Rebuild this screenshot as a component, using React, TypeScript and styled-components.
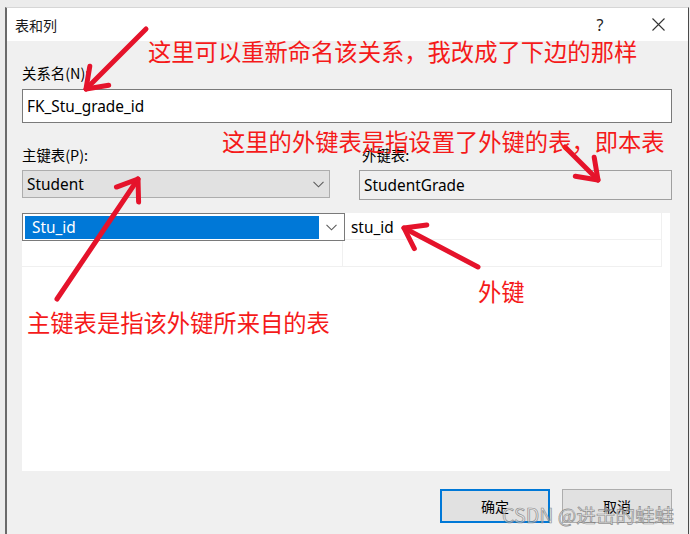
import styled, { createGlobalStyle } from "styled-components";

const GlobalStyle = createGlobalStyle`
  html, body {
    margin: 0;
    padding: 0;
    background: #e8e8e8;
  }
  body {
    font-family: "Noto Sans", "Noto Sans CJK SC", sans-serif;
    color: #000;
  }
`;

type Pt = { x: number; y: number };

const ARROWS: { tail: Pt; tip: Pt }[] = [
  { tail: { x: 146, y: 29 }, tip: { x: 86, y: 89 } },
  { tail: { x: 57, y: 299 }, tip: { x: 138, y: 179 } },
  { tail: { x: 565, y: 147 }, tip: { x: 598, y: 180 } },
  { tail: { x: 478, y: 267 }, tip: { x: 404, y: 228 } },
];

const NOTES = [
  { x: 148, y: 38, text: "这里可以重新命名该关系，我改成了下边的那样" },
  { x: 222, y: 128, text: "这里的外键表是指设置了外键的表，即本表" },
  { x: 27, y: 309, text: "主键表是指该外键所来自的表" },
  { x: 478, y: 278, text: "外键" },
];

function Arrow({ tail, tip }: { tail: Pt; tip: Pt }) {
  const ang = Math.atan2(tail.y - tip.y, tail.x - tip.x);
  const len = 23;
  const spread = 0.62;
  const b1 = { x: tip.x + len * Math.cos(ang + spread), y: tip.y + len * Math.sin(ang + spread) };
  const b2 = { x: tip.x + len * Math.cos(ang - spread), y: tip.y + len * Math.sin(ang - spread) };
  return (
    <g stroke="#e5132b" strokeWidth={5} strokeLinecap="round" strokeLinejoin="round" fill="none">
      <line x1={tail.x} y1={tail.y} x2={tip.x} y2={tip.y} />
      <polyline points={`${b1.x},${b1.y} ${tip.x},${tip.y} ${b2.x},${b2.y}`} />
    </g>
  );
}

function Chevron() {
  return (
    <svg width="11" height="7" viewBox="0 0 11 7">
      <path d="M0.5 0.8 L5.5 5.8 L10.5 0.8" stroke="#5c5c5c" strokeWidth="1.1" fill="none" />
    </svg>
  );
}

export default function App() {
  return (
    <Page>
      <GlobalStyle />
      <Dialog>
        <TitleBar>
          <Title>表和列</Title>
          <HelpButton>?</HelpButton>
          <CloseButton>
            <svg width="13" height="13" viewBox="0 0 13 13">
              <path d="M0.5 0.5 L12.5 12.5 M12.5 0.5 L0.5 12.5" stroke="#333" strokeWidth="1.1" />
            </svg>
          </CloseButton>
        </TitleBar>
        <Body>
          <Label>关系名(N):</Label>
          <TextInput>FK_Stu_grade_id</TextInput>
          <TwoCols>
            <Field>
              <Label>主键表(P):</Label>
              <Combo>
                <span>Student</span>
                <Chevron />
              </Combo>
            </Field>
            <Field>
              <Label $indent={3}>外键表:</Label>
              <ReadOnlyBox>StudentGrade</ReadOnlyBox>
            </Field>
          </TwoCols>
          <GridPanel>
            <GridTable>
              <GridRow>
                <KeyCell>
                  <CellCombo>
                    <Selected>Stu_id</Selected>
                    <ChevronSlot>
                      <Chevron />
                    </ChevronSlot>
                  </CellCombo>
                </KeyCell>
                <Cell>stu_id</Cell>
              </GridRow>
              <GridRow>
                <Cell />
                <Cell />
              </GridRow>
            </GridTable>
          </GridPanel>
          <Footer>
            <Button $primary>确定</Button>
            <Button>取消</Button>
          </Footer>
        </Body>
      </Dialog>

      <Overlay width="690" height="534" viewBox="0 0 690 534">
        {ARROWS.map((a, i) => (
          <Arrow key={i} tail={a.tail} tip={a.tip} />
        ))}
      </Overlay>
      {NOTES.map((n) => (
        <Note key={n.text} $x={n.x} $y={n.y}>
          {n.text}
        </Note>
      ))}
      <Watermark>CSDN @进击的蛙蛙</Watermark>
    </Page>
  );
}

const Page = styled.div`
  position: relative;
  width: 690px;
  height: 534px;
  overflow: hidden;
  box-sizing: border-box;
  padding: 7px 1px 0 5px;
  display: flex;
  background: #ececec;
`;

const Dialog = styled.div`
  flex: 1;
  display: flex;
  flex-direction: column;
  background: #f0f0f0;
  border-left: 2px solid #6a6a6a;
  border-right: 1px solid #4a4a4a;
  border-top: 1px solid #d6d6d6;
`;

const TitleBar = styled.div`
  height: 33px;
  background: #fff;
  display: flex;
  align-items: center;
  padding-left: 8px;
`;

const Title = styled.div`
  flex: 1;
  font-family: "Noto Sans CJK SC", sans-serif;
  font-size: 14px;
  color: #1a1a1a;
`;

const HelpButton = styled.div`
  width: 30px;
  text-align: center;
  font-size: 16px;
  color: #222;
  margin-right: 20px;
`;

const CloseButton = styled.div`
  width: 46px;
  height: 33px;
  display: flex;
  align-items: center;
  justify-content: center;
  margin-right: 7px;
`;

const Body = styled.div`
  flex: 1;
  display: flex;
  flex-direction: column;
  padding: 23px 16px 0 15px;
`;

const Label = styled.div<{ $indent?: number }>`
  font-family: "Noto Sans CJK SC", sans-serif;
  font-size: 14.4px;
  line-height: 18px;
  padding-left: ${(p) => p.$indent ?? 0}px;
  margin-bottom: 6px;
`;

const TextInput = styled.div`
  height: 34px;
  box-sizing: border-box;
  background: #fff;
  border: 1px solid #7a7a7a;
  display: flex;
  align-items: center;
  padding-left: 4px;
  font-size: 15.4px;
  margin-top: 1px;
  margin-bottom: 23px;
`;

const TwoCols = styled.div`
  display: grid;
  grid-template-columns: 308px 1fr;
  column-gap: 29px;
  align-items: start;
`;

const Field = styled.div`
  display: flex;
  flex-direction: column;
`;

const Combo = styled.div`
  height: 28px;
  box-sizing: border-box;
  background: #e1e1e1;
  border: 1px solid #adadad;
  display: flex;
  align-items: center;
  justify-content: space-between;
  padding: 0 5px 0 4px;
  font-size: 15.4px;
`;

const ReadOnlyBox = styled.div`
  height: 30px;
  box-sizing: border-box;
  background: #f0f0f0;
  border: 1px solid #a0a0a0;
  display: flex;
  align-items: center;
  padding-left: 4px;
  font-size: 15.4px;
`;

const GridPanel = styled.div`
  margin-top: 13px;
  margin-right: 2px;
  height: 258px;
  background: #fff;
`;

const GridTable = styled.div`
  width: 640px;
  display: flex;
  flex-direction: column;
`;

const GridRow = styled.div`
  display: grid;
  grid-template-columns: 321px 1fr;
  height: 26px;
  border-bottom: 1px solid #f0f0f0;
`;

const Cell = styled.div`
  border-right: 1px solid #f0f0f0;
  display: flex;
  align-items: center;
  padding-left: 8px;
  font-size: 15.4px;
`;

const KeyCell = styled.div`
  position: relative;
`;

const CellCombo = styled.div`
  width: 323px;
  height: 28px;
  box-sizing: border-box;
  border: 1px solid #7a7a7a;
  background: #fff;
  display: flex;
  align-items: stretch;
  padding: 2px 0 1px 2px;
`;

const Selected = styled.div`
  width: 294px;
  background: #0078d7;
  color: #fff;
  font-size: 15.4px;
  display: flex;
  align-items: center;
  padding-left: 7px;
  box-sizing: border-box;
`;

const ChevronSlot = styled.div`
  flex: 1;
  display: flex;
  align-items: center;
  justify-content: center;
`;

const Footer = styled.div`
  display: flex;
  justify-content: flex-end;
  gap: 12px;
  margin-top: 18px;
`;

const Button = styled.div<{ $primary?: boolean }>`
  width: 110px;
  height: 34px;
  box-sizing: border-box;
  background: #e1e1e1;
  border: ${(p) => (p.$primary ? "2px solid #0078d7" : "1px solid #adadad")};
  display: flex;
  align-items: center;
  justify-content: center;
  font-family: "Noto Sans CJK SC", sans-serif;
  font-size: 14px;
`;

const Overlay = styled.svg`
  position: absolute;
  left: 0;
  top: 0;
  pointer-events: none;
`;

const Note = styled.div<{ $x: number; $y: number }>`
  position: absolute;
  left: ${(p) => p.$x}px;
  top: ${(p) => p.$y}px;
  font-family: "Noto Sans CJK SC", sans-serif;
  font-size: 23.3px;
  line-height: 26px;
  color: #f51a1a;
  white-space: nowrap;
`;

const Watermark = styled.div`
  position: absolute;
  left: 502px;
  top: 503px;
  font-family: "Noto Sans CJK SC", sans-serif;
  font-size: 19.6px;
  line-height: 24px;
  color: rgba(235, 235, 235, 0.55);
  -webkit-text-stroke: 0.7px rgba(110, 110, 110, 0.75);
  white-space: nowrap;
`;
